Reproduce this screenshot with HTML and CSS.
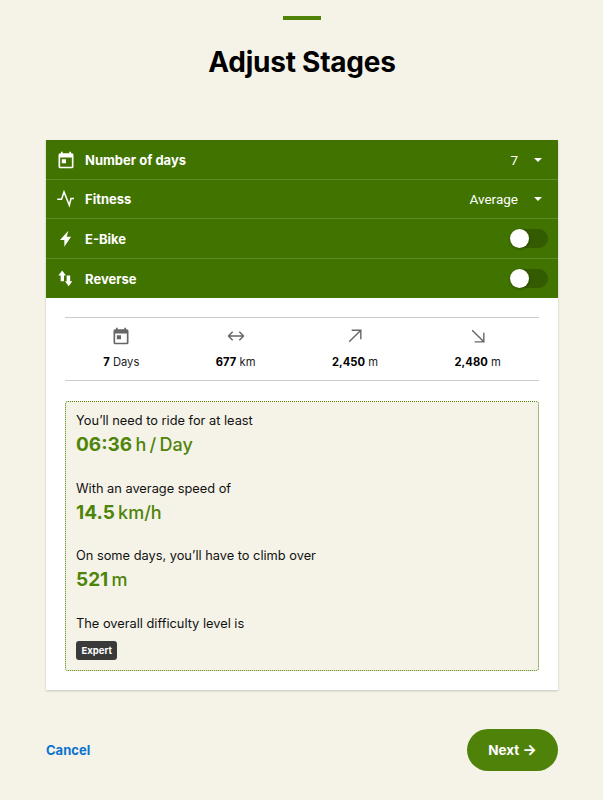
FILE: index.html
```html
<!doctype html>
<html lang="en">
    <head>
        <meta charset="UTF-8" />
        <meta name="viewport" content="width=device-width, initial-scale=1.0" />
        <title>Adjust Stages</title>
        <link rel="stylesheet" href="styles.css">
    </head>
    <body>
        <div class="page">
            <div class="accent"></div>
            <h1>Adjust Stages</h1>

            <div class="card">
                <div class="options">
                    <div class="option">
                        <svg class="option-icon" viewBox="0 0 24 24"><path d="M19 4h-1V2h-2v2H8V2H6v2H5a2 2 0 0 0-2 2v14a2 2 0 0 0 2 2h14a2 2 0 0 0 2-2V6a2 2 0 0 0-2-2zm0 16H5V9h14v11zM7 11h5v5H7z"/></svg>
                        <span class="option-label">Number of days</span>
                        <span class="option-value">7</span>
                        <span class="caret"></span>
                    </div>
                    <div class="option option-short">
                        <svg class="option-icon" viewBox="0 0 24 24"><path class="pulse" d="M1.500 12.200h5.200L9.600 3.500 16 19.500l2-8h3.600"/></svg>
                        <span class="option-label">Fitness</span>
                        <span class="option-value">Average</span>
                        <span class="caret"></span>
                    </div>
                    <div class="option">
                        <svg class="option-icon" viewBox="0 0 24 24"><path d="M14.800 2 4.800 13.200H10v8l8-12h-5.200z"/></svg>
                        <span class="option-label">E-Bike</span>
                        <span class="toggle"><span class="knob"></span></span>
                    </div>
                    <div class="option">
                        <svg class="option-icon" viewBox="0 0 24 24"><path d="M7.400 1.800 2.800 7.800h2.800v6.800h4V7.800H12zM12.800 7.800v6.800h-2l4.400 6 4.400-6H17V7.800z"/></svg>
                        <span class="option-label">Reverse</span>
                        <span class="toggle"><span class="knob"></span></span>
                    </div>
                </div>

                <div class="card-body">
                    <div class="stats">
                        <div class="stat">
                            <svg class="stat-icon" viewBox="0 0 24 24"><path d="M19 4h-1V2h-2v2H8V2H6v2H5a2 2 0 0 0-2 2v14a2 2 0 0 0 2 2h14a2 2 0 0 0 2-2V6a2 2 0 0 0-2-2zm0 16H5V9h14v11zM7 11h5v5H7z"/></svg>
                            <div class="stat-text"><b>7</b> Days</div>
                        </div>
                        <div class="stat">
                            <svg class="stat-icon" viewBox="0 0 24 24"><path class="line" d="M4 12h16M8 7l-5 5 5 5M16 7l5 5-5 5"/></svg>
                            <div class="stat-text"><b>677</b> km</div>
                        </div>
                        <div class="stat">
                            <svg class="stat-icon" viewBox="0 0 24 24"><path class="line" d="M5 19 19 5M8 5h11v11"/></svg>
                            <div class="stat-text"><b>2,450</b> m</div>
                        </div>
                        <div class="stat">
                            <svg class="stat-icon" viewBox="0 0 24 24"><path class="line" d="M5 5l14 14M19 8v11H8"/></svg>
                            <div class="stat-text"><b>2,480</b> m</div>
                        </div>
                    </div>

                    <div class="summary">
                        <div class="summary-item">
                            <div class="summary-label">You’ll need to ride for at least</div>
                            <div class="summary-value"><b>06:36</b> h / Day</div>
                        </div>
                        <div class="summary-item">
                            <div class="summary-label">With an average speed of</div>
                            <div class="summary-value"><b>14.5</b> km/h</div>
                        </div>
                        <div class="summary-item">
                            <div class="summary-label">On some days, you’ll have to climb over</div>
                            <div class="summary-value"><b>521</b> m</div>
                        </div>
                        <div class="summary-item">
                            <div class="summary-label">The overall difficulty level is</div>
                            <span class="badge">Expert</span>
                        </div>
                    </div>
                </div>
            </div>

            <div class="actions">
                <a class="cancel" href="#">Cancel</a>
                <a class="button" href="#">Next <span class="arrow">→</span></a>
            </div>
        </div>
    </body>
</html>
```

FILE: styles.css
```css
body {
    font-family: Inter, "Liberation Sans", sans-serif;
    margin: 0;
    padding: 0;
    background: #f5f3e8;
    color: #000;
}
.page {
    display: flex;
    flex-direction: column;
    align-items: center;
    padding: 16px 45px 0 46px;
}
.accent {
    width: 38px;
    height: 4px;
    background: #4f8208;
}
h1 {
    margin: 25px 0 0;
    font-size: 28px;
    line-height: 34px;
    font-weight: 700;
    letter-spacing: -0.25px;
}
.card {
    width: 100%;
    margin-top: 61px;
    background: #fff;
    box-shadow: 0 1px 2px rgba(0, 0, 0, 0.2);
}
.options {
    background: #417300;
    color: #fff;
}
.option {
    display: flex;
    align-items: center;
    height: 39px;
    padding: 0 10px;
    border-bottom: 1px solid #5f8a2a;
}
.option-short {
    height: 38px;
}
.option:last-child {
    border-bottom: none;
}
.option-icon {
    width: 20px;
    height: 20px;
    fill: #fff;
    margin-right: 9px;
    flex: none;
}
.option-icon .pulse {
    fill: none;
    stroke: #fff;
    stroke-width: 1.8;
}
.option-label {
    flex: 1;
    font-size: 13px;
    font-weight: 700;
}
.option-value {
    font-family: Roboto, sans-serif;
    font-size: 13.5px;
}
.caret {
    width: 0;
    height: 0;
    margin: 0 6px 0 16px;
    border-left: 4px solid transparent;
    border-right: 4px solid transparent;
    border-top: 4px solid #fff;
}
.toggle {
    display: block;
    width: 38px;
    height: 19px;
    border-radius: 10px;
    background: #335b00;
    position: relative;
}
.knob {
    position: absolute;
    left: 0;
    top: 0;
    width: 19px;
    height: 19px;
    border-radius: 50%;
    background: #fff;
    box-shadow: 0 1px 3px rgba(0, 0, 0, 0.3);
}
.card-body {
    padding: 19px;
}
.stats {
    display: flex;
    justify-content: space-around;
    height: 62px;
    border-top: 1px solid #ccc;
    border-bottom: 1px solid #ccc;
}
.stat {
    display: flex;
    flex-direction: column;
    align-items: center;
    padding-top: 8px;
}
.stat-icon {
    width: 20px;
    height: 20px;
    fill: #666;
}
.stat-icon .line {
    fill: none;
    stroke: #666;
    stroke-width: 1.7;
}
.stat-text {
    margin-top: 9px;
    font-size: 11.2px;
    line-height: 14px;
    color: #222;
}
.stat-text b {
    color: #000;
}
.summary {
    margin-top: 20px;
    padding: 11px 10px;
    background: #f5f3e8;
    border: 1px dotted #4f8208;
    border-radius: 3px;
    height: 270px;
    box-sizing: border-box;
}
.summary-item {
    margin-bottom: 23.5px;
}
.summary-label {
    font-size: 12.8px;
    line-height: 16px;
    color: #111;
}
.summary-value {
    margin-top: 4px;
    font-size: 18px;
    font-weight: 500;
    line-height: 24px;
    color: #4e8409;
    word-spacing: -1.5px;
}
.summary-value b {
    font-size: 19px;
    font-weight: 700;
}
.badge {
    display: inline-block;
    margin-top: 9px;
    padding: 0 5.5px;
    font-size: 9.5px;
    font-weight: 700;
    line-height: 19px;
    color: #fff;
    background: #3a3a3a;
    border-radius: 3px;
}
.actions {
    display: flex;
    justify-content: space-between;
    align-items: center;
    width: 100%;
    margin-top: 39px;
}
.cancel {
    font-size: 13px;
    font-weight: 700;
    color: #0b73d0;
    text-decoration: none;
}
.button {
    display: block;
    width: 91px;
    height: 42px;
    line-height: 41px;
    text-align: center;
    font-size: 13.5px;
    font-weight: 700;
    color: #fff;
    background: #4f8208;
    border-radius: 21px;
    text-decoration: none;
}
.arrow {
    font-size: 15px;
}
```
